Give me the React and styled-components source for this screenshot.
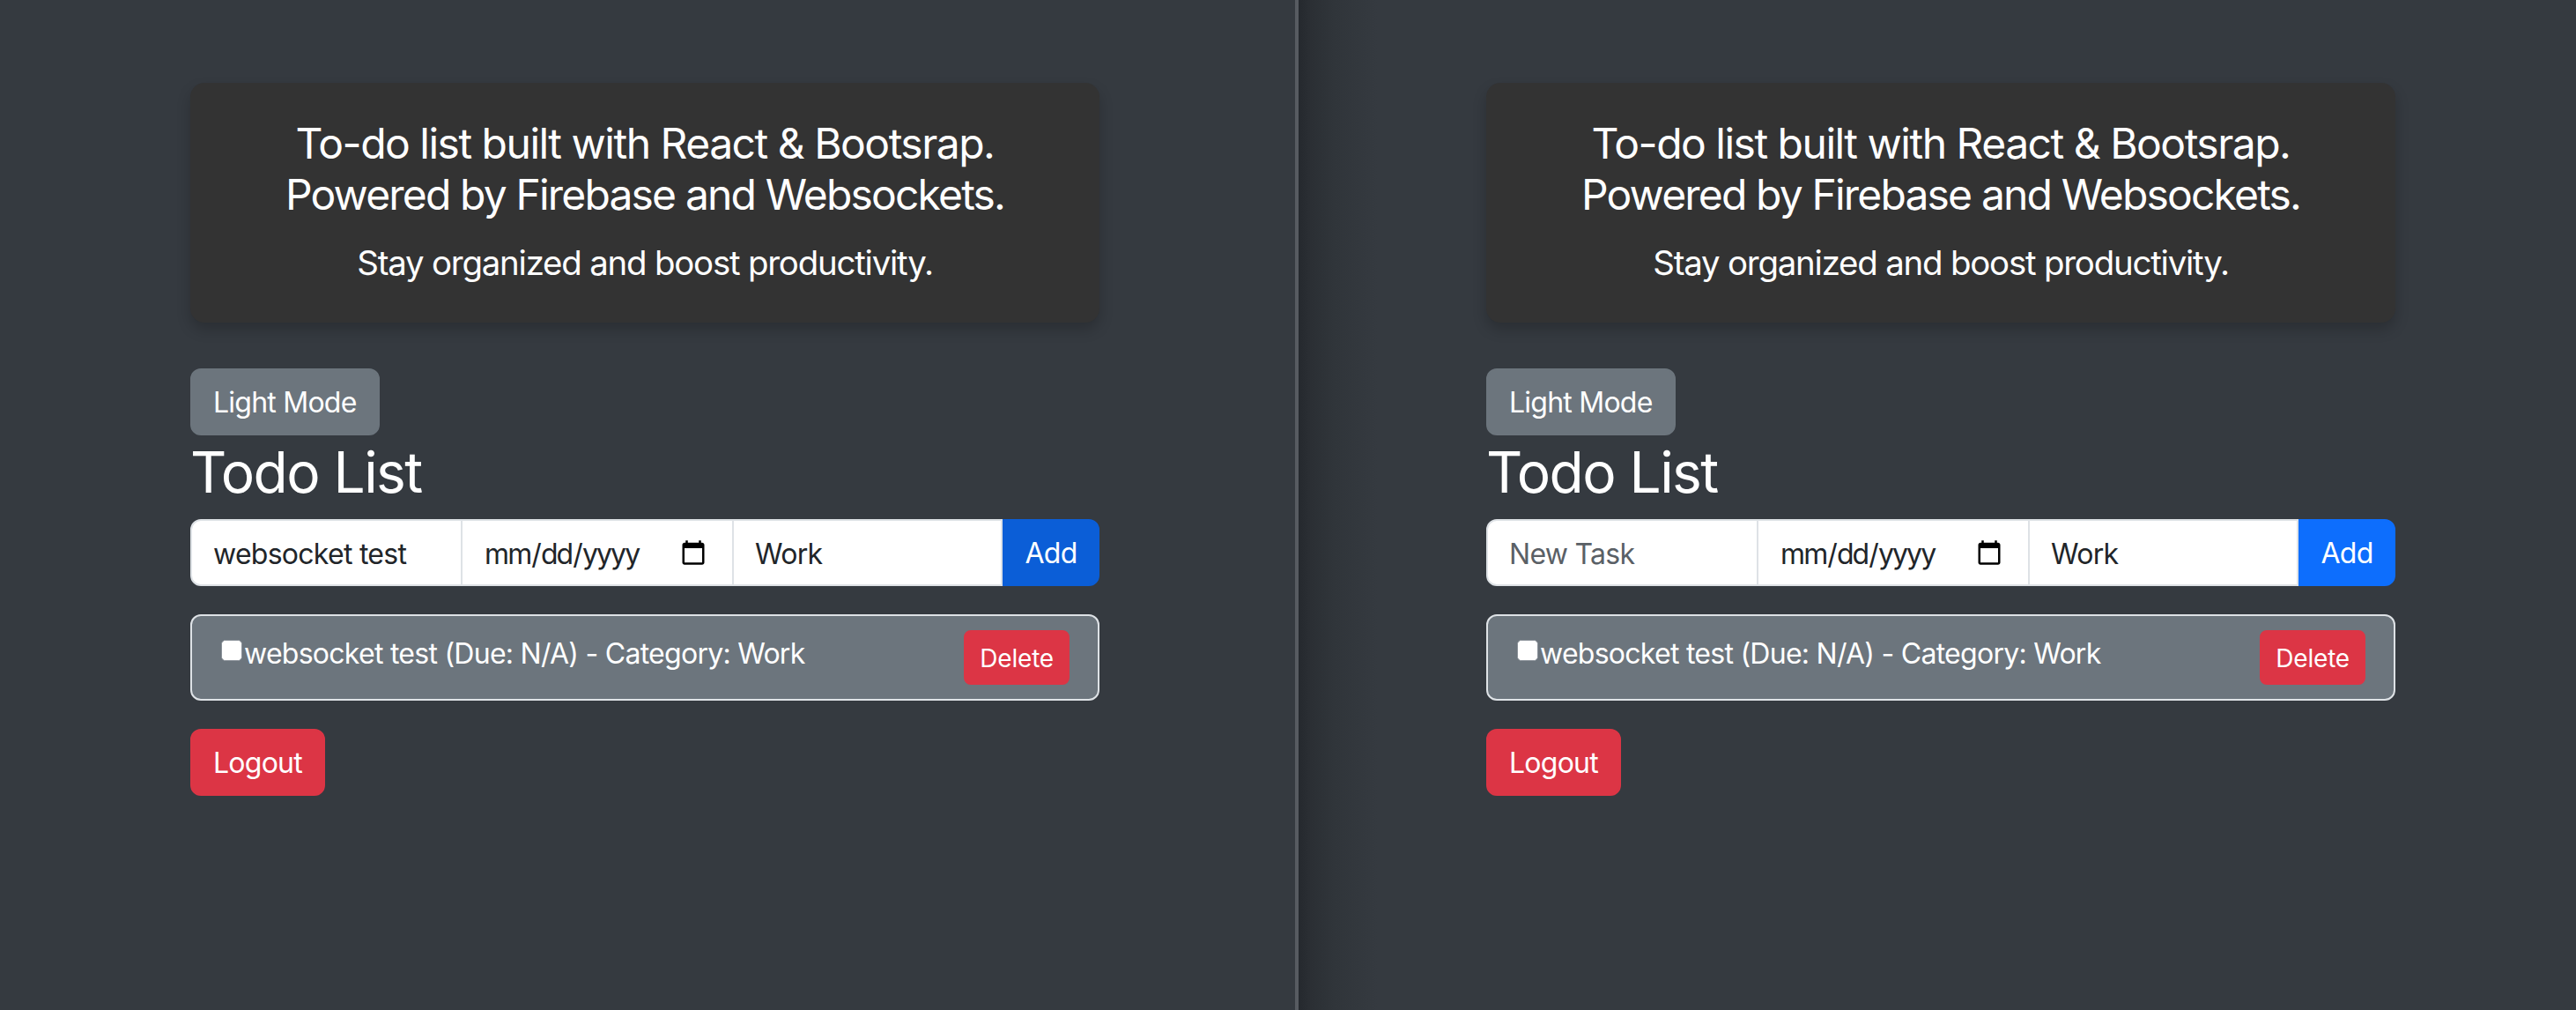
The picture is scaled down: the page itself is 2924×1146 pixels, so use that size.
import React from "react";
import styled, { createGlobalStyle } from "styled-components";

const Global = createGlobalStyle`
  html, body { margin: 0; padding: 0; height: 100%; background: #353a40; }
  body { font-family: Inter, "Liberation Sans", sans-serif; }
  * { box-sizing: border-box; }
`;

const Screen = styled.div`
  display: flex;
  width: 2924px;
  height: 1146px;
  overflow: hidden;
  background: #353a40;
`;

const Pane = styled.section`
  flex: ${(p) => (p.$first ? "0 0 1470px" : "1 1 0")};
  padding: 94px 0 0 ${(p) => (p.$first ? "216px" : "213px")};
  background: ${(p) =>
    p.$first
      ? "#353a40"
      : "linear-gradient(90deg, #25292e 0, #2b2f34 14px, #30353a 40px, #353a40 90px)"};
`;

const Divider = styled.div`
  flex: 0 0 4px;
  background: #575b61;
`;

const Column = styled.div`
  width: 1032px;
  display: flex;
  flex-direction: column;
  align-items: flex-start;
`;

const Hero = styled.header`
  width: 100%;
  height: 272px;
  padding: 40px;
  margin-bottom: 52px;
  background: #333333;
  border-radius: 16px;
  box-shadow: 0 8px 16px rgba(0, 0, 0, 0.2);
  color: #fff;
  text-align: center;
`;

const HeroTitle = styled.h2`
  margin: 0 0 16px;
  font-size: 48px;
  font-weight: 400;
  line-height: 58px;
`;

const HeroLine = styled.span`
  display: block;
  letter-spacing: ${(p) => p.$tracking};
`;

const HeroText = styled.p`
  margin: 0;
  padding-top: 2px;
  font-size: 38.4px;
  line-height: 60px;
  letter-spacing: -1.2px;
`;

const Button = styled.button`
  height: ${(p) => (p.$small ? "62px" : "76px")};
  padding: ${(p) => (p.$small ? "2px 16px 0" : "2px 24px 0")};
  border: 2px solid ${(p) => p.$bg};
  border-radius: ${(p) => (p.$small ? "8px" : "12px")};
  background: ${(p) => p.$bg};
  color: #fff;
  font-family: inherit;
  font-size: ${(p) => (p.$small ? "28px" : "32px")};
  line-height: 1.5;
  letter-spacing: ${(p) => (p.$small ? "-0.2px" : "-0.76px")};
  flex: none;
`;

const Title = styled.h1`
  margin: 0;
  height: 95px;
  color: #fff;
  font-size: 64px;
  font-weight: 400;
  line-height: 83px;
  letter-spacing: -1.55px;
`;

const InputGroup = styled.form`
  display: flex;
  width: 100%;
  height: 76px;
  margin-bottom: 32px;
`;

const fieldStyles = `
  min-width: 0;
  height: 76px;
  margin: 0 0 0 -2px;
  padding: 2px 24px 0;
  border: 2px solid #dee2e6;
  background: #fff;
  color: #212529;
  font-family: inherit;
  font-size: 32px;
  letter-spacing: -0.73px;
  outline: none;
`;

const TextField = styled.input`
  ${fieldStyles}
  flex: 0 0 309px;
  margin-left: 0;
  border-radius: 12px 0 0 12px;
  &::placeholder { color: #5a6066; opacity: 1; }
`;

const DateField = styled.input`
  ${fieldStyles}
  flex: 0 0 310px;
  letter-spacing: -1.9px;
  &::-webkit-calendar-picker-indicator {
    width: 32px;
    height: 32px;
    padding: 0;
    margin: 0 4px 0 0;
  }
`;

const SelectField = styled.select`
  ${fieldStyles}
  flex: 1 1 0;
  appearance: none;
  border-radius: 0;
`;

const AddButton = styled(Button)`
  width: 110px;
  padding: 2px 0 0;
  border-radius: 0 12px 12px 0;
`;

const List = styled.ul`
  width: 100%;
  margin: 0 0 32px;
  padding: 0;
  list-style: none;
`;

const Item = styled.li`
  display: flex;
  justify-content: space-between;
  align-items: flex-start;
  height: 98px;
  padding: 16px 32px;
  border: 2px solid #dee2e6;
  border-radius: 12px;
  background: #6c757d;
  color: #fff;
  font-size: 32px;
  line-height: 48px;
  letter-spacing: -0.73px;
`;

const ItemLabel = styled.div`
  display: flex;
  align-items: flex-start;
`;

const ItemText = styled.span`
  padding-top: 3px;
`;

const Check = styled.input`
  appearance: none;
  flex: none;
  width: 24px;
  height: 24px;
  margin: 11px 2px 0 1px;
  border: 1px solid #8a9199;
  outline: 1px solid #fff;
  outline-offset: -2px;
  border-radius: 5px;
  background: #fff;
`;

const App = () => {
  const panes = [
    { first: true, task: "websocket test", add: "#0b5ed7" },
    { first: false, task: "", add: "#0d6efd" },
  ];
  return (
    <>
      <Global />
      <Screen>
        {panes.map((p, i) => (
          <React.Fragment key={i}>
            {i === 1 && <Divider />}
            <Pane $first={p.first}>
              <Column>
                <Hero>
                  <HeroTitle>
                    <HeroLine $tracking="-1.5px">To-do list built with React &amp; Bootsrap.</HeroLine>
                    <HeroLine $tracking="-1.83px">Powered by Firebase and Websockets.</HeroLine>
                  </HeroTitle>
                  <HeroText>Stay organized and boost productivity.</HeroText>
                </Hero>
                <Button type="button" $bg="#6c757d">Light Mode</Button>
                <Title>Todo List</Title>
                <InputGroup>
                  <TextField type="text" placeholder="New Task" defaultValue={p.task} />
                  <DateField type="date" />
                  <SelectField defaultValue="Work">
                    <option>Work</option>
                    <option>Personal</option>
                  </SelectField>
                  <AddButton type="button" $bg={p.add}>Add</AddButton>
                </InputGroup>
                <List>
                  <Item>
                    <ItemLabel>
                      <Check type="checkbox" />
                      <ItemText>websocket test (Due: N/A) - Category: Work</ItemText>
                    </ItemLabel>
                    <Button type="button" $small $bg="#dc3545">Delete</Button>
                  </Item>
                </List>
                <Button type="button" $bg="#dc3545">Logout</Button>
              </Column>
            </Pane>
          </React.Fragment>
        ))}
      </Screen>
    </>
  );
};

export default App;
